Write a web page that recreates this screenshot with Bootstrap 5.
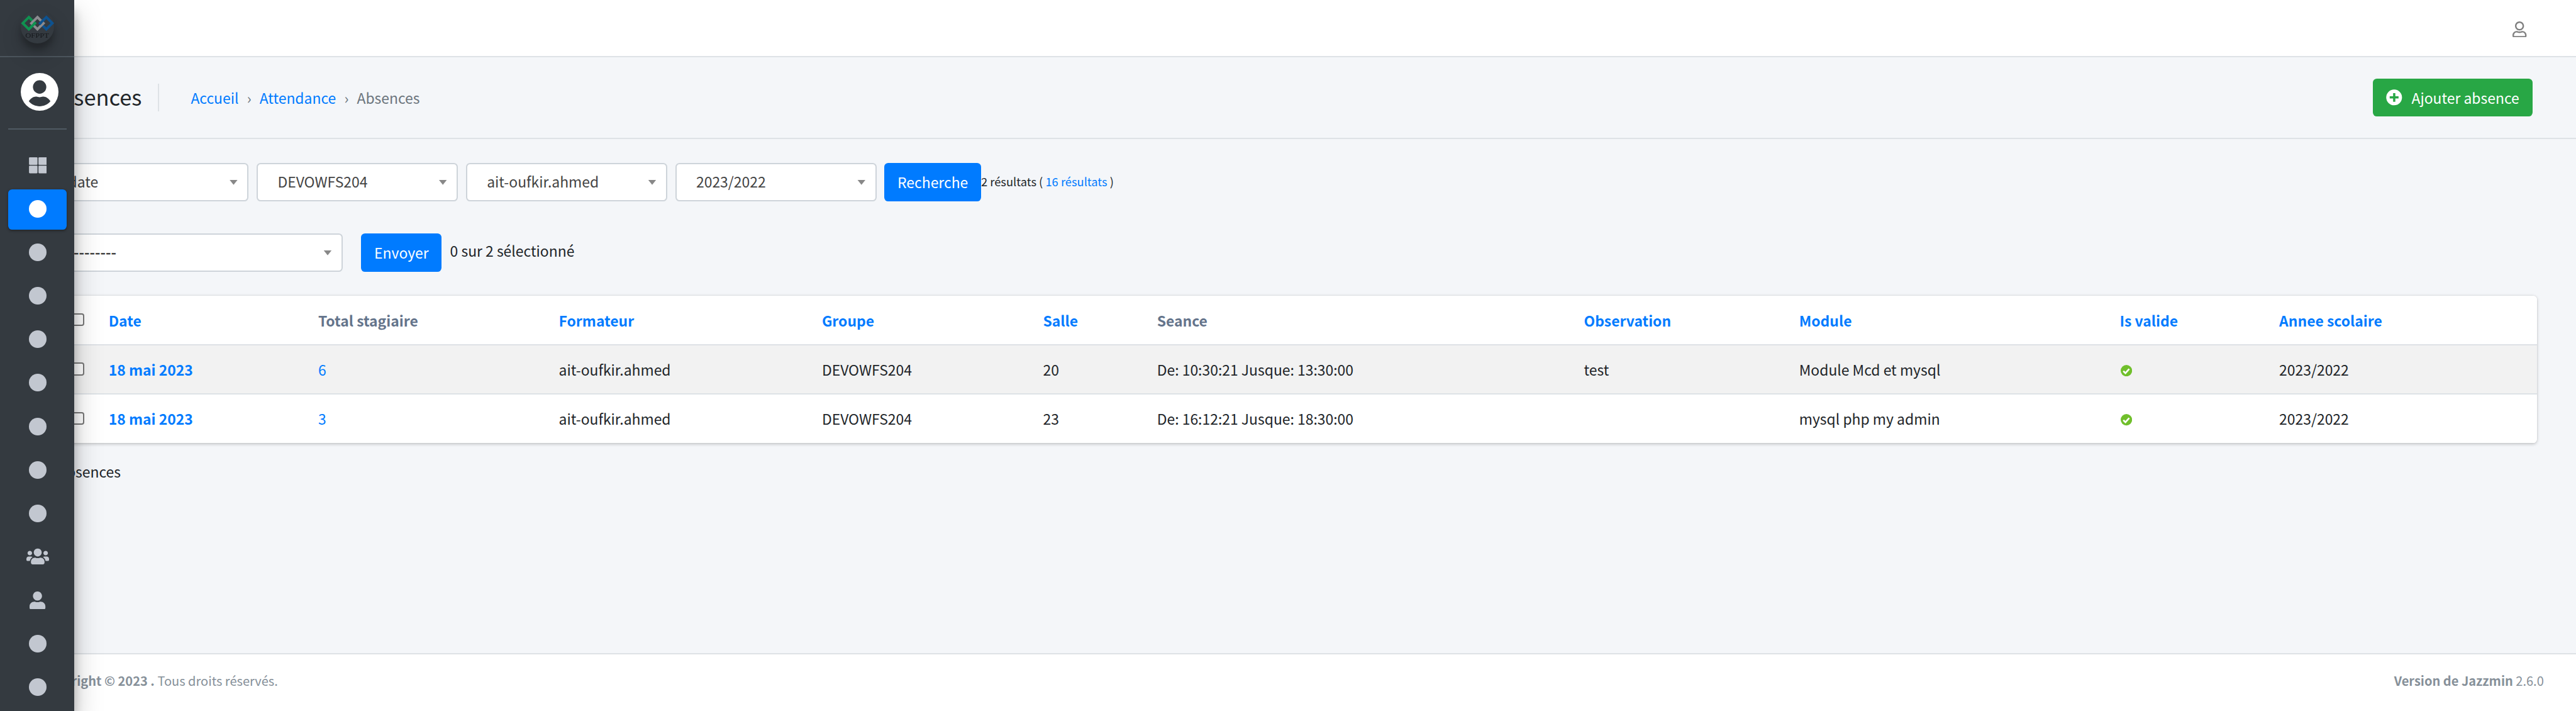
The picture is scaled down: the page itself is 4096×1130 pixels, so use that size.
<!DOCTYPE html>
<html lang="fr">
<head>
<meta charset="utf-8">
<meta name="viewport" content="width=device-width, initial-scale=1">
<title>Absences</title>
<link href="https://cdn.jsdelivr.net/npm/bootstrap@5.3.0/dist/css/bootstrap.min.css" rel="stylesheet">
<style>
:root{font-size:25.6px}
body{font-family:"Noto Sans CJK SC","Noto Sans",sans-serif;font-size:22.92px;line-height:38.4px;color:#212529;background:#f4f6f9;height:1130px;overflow:hidden;--left:75.2px}
a{color:#007bff;text-decoration:none}
svg{display:block;fill:currentColor}
.topnav{height:91.2px;border-bottom:2px solid #dee2e6;padding:3.6px 78.4px 0 0;color:#808080}
.page-head{height:129.6px;border-bottom:2px solid #dee2e6;padding-left:var(--left);padding-right:68.8px}
.page-head h1{font-size:34.4px;line-height:1.2;font-weight:400;margin:0;padding-bottom:3.6px;width:176px}
.crumbs{border-left:2px solid #dee2e6;height:44.8px;padding-left:50.2px;color:#6c757d}
.crumbs .sep{width:33.2px;text-align:center}
.btn{--bs-btn-font-size:22.92px;--bs-btn-border-radius:6.4px;--bs-btn-line-height:38.4px;height:60.8px;padding:0;border:0;color:#fff;white-space:nowrap}
.btn-primary{--bs-btn-bg:#007bff}
.btn-success{--bs-btn-bg:#28a745;width:254.4px}
.btn-success svg{margin-right:14.6px}
.btn-search{width:153.6px}
.btn-send{width:128px;margin:0 13.2px 0 29.6px}
.main-area{padding-left:var(--left);padding-right:62.4px;padding-top:38.4px}
.filters{gap:12.8px}
.actions{margin:51.2px 0 38.4px}
.picker{width:320px;height:60.8px;background:#fff;border:2px solid #ced4da;border-radius:6.4px;color:#444;padding:0 15.4px 3.6px 31.4px}
.picker::after{content:"";width:12.8px;height:8px;background:#888;clip-path:polygon(0 0,100% 0,50% 100%);margin-top:4px}
.picker-wide{width:469.6px}
.hits{font-size:18.34px;padding-bottom:3px}
.dashes{font-weight:700}
.picked{padding-bottom:7.2px}
.total{margin-top:25.6px}
.list-card{border-radius:6.4px;overflow:hidden;box-shadow:0 0 1.6px rgba(0,0,0,.125),0 1.6px 4.8px rgba(0,0,0,.2);background:#fff;height:233.6px}
.list-card .table{--bs-table-bg:#fff;--bs-table-striped-bg:#f2f2f2;--bs-table-color:#212529;--bs-table-striped-color:#212529;table-layout:fixed;width:3958.4px;border-collapse:separate;border-spacing:0}
.list-card .table>:not(caption)>*>*{height:78.4px;padding:0 19.2px;border-bottom:2px solid #dee2e6;vertical-align:middle;white-space:nowrap;line-height:38.4px}
.list-card .table>tbody>tr:last-child>*{border-bottom:0;height:76.8px}
.list-card .table>thead>tr>*{padding-top:1px}
.list-card th{font-weight:700}
.list-card thead th{color:#64748b}
.list-card .table>:not(caption)>*>.tick{padding:0 0 0 38.4px}
.box{width:20.8px;height:20.8px;border:2px solid #767676;border-radius:4px;background:#fff;margin-top:-1px}
.valid{width:18.2px;height:18.2px;margin:4px 0 0 1px}
.foot{height:92px;background:#fff;border-top:2px solid #dee2e6;color:#869099;font-size:20.05px;padding:0 51.2px 6px 63.5px}
.side{position:fixed;left:0;top:0;bottom:0;width:118.4px;background:#343a40;color:#c2c7d0;box-shadow:0 22.4px 44.8px rgba(0,0,0,.25),0 16px 16px rgba(0,0,0,.22);overflow:visible}
.brand{height:91.2px;border-bottom:2px solid #4b545c;padding:16px 0 0 33.4px}
.brand-disc{width:53px;height:53px;border-radius:50%;box-shadow:0 16px 32px rgba(0,0,0,.19),0 9.6px 9.6px rgba(0,0,0,.23)}
.brand-disc path{fill:none;stroke-width:5}
.who{height:115.2px;margin:0 12.8px;border-bottom:2px solid #4f5962;padding:25.2px 0 0 20.2px;color:#fff}
.menu{padding:25.2px 12.8px 0}
.menu .nav-link{height:64px;margin-bottom:5.12px;padding:0 0 1.4px 1.6px;border-radius:6.4px;color:#c2c7d0}
.menu .nav-link.active{background:#007bff;color:#fff;box-shadow:0 1.6px 4.8px rgba(0,0,0,.12),0 1.6px 3.2px rgba(0,0,0,.24)}
.dot{width:28px;height:28px;border-radius:50%;background:currentColor}
</style>
<script src="https://cdn.jsdelivr.net/npm/bootstrap@5.3.0/dist/js/bootstrap.bundle.min.js"></script>
</head>
<body class="d-flex flex-column">
<nav class="topnav bg-white d-flex align-items-center justify-content-end flex-shrink-0">
  <svg width="22.4" height="25.6" viewBox="0 0 448 512"><path d="M313.6 304c-28.7 0-42.5 16-89.6 16-47.1 0-60.8-16-89.6-16C60.2 304 0 364.2 0 438.4V464c0 26.5 21.5 48 48 48h352c26.5 0 48-21.5 48-48v-25.6c0-74.2-60.2-134.4-134.4-134.4zM400 464H48v-25.6c0-47.6 38.8-86.4 86.4-86.4 14.6 0 38.3 16 89.6 16 51.7 0 74.9-16 89.6-16 47.6 0 86.4 38.8 86.4 86.4V464zM224 288c79.5 0 144-64.5 144-144S303.5 0 224 0 80 64.5 80 144s64.5 144 144 144zm0-240c52.9 0 96 43.1 96 96s-43.1 96-96 96-96-43.1-96-96 43.1-96 96-96z"/></svg>
</nav>
<header class="page-head d-flex align-items-center flex-shrink-0">
  <h1>Absences</h1>
  <div class="crumbs d-flex align-items-center"><a href="#">Accueil</a><span class="sep">›</span><a href="#">Attendance</a><span class="sep">›</span><span>Absences</span></div>
  <a href="#" class="btn btn-success ms-auto d-flex align-items-center justify-content-center">
    <svg width="25.6" height="25.6" viewBox="0 0 32 32"><path fill-rule="evenodd" d="M16 .3a15.7 15.7 0 1 0 0 31.4 15.7 15.7 0 0 0 0-31.4zM14 7.5h4.4v6.3h6.4v4.4h-6.4v6.6H14v-6.6H7.2v-4.4H14z"/></svg>Ajouter absence</a>
</header>
<main class="main-area flex-grow-1">
  <div class="d-flex align-items-center">
    <div class="filters d-flex">
      <div class="picker d-flex align-items-center justify-content-between">date</div>
      <div class="picker d-flex align-items-center justify-content-between">DEVOWFS204</div>
      <div class="picker d-flex align-items-center justify-content-between">ait-oufkir.ahmed</div>
      <div class="picker d-flex align-items-center justify-content-between">2023/2022</div>
      <button class="btn btn-primary btn-search">Recherche</button>
    </div>
    <span class="hits">2 résultats ( <a href="#">16 résultats</a> )</span>
  </div>
  <div class="actions d-flex align-items-center">
    <div class="picker picker-wide d-flex align-items-center justify-content-between"><span class="dashes">---------</span></div>
    <button class="btn btn-primary btn-send">Envoyer</button>
    <span class="picked">0 sur 2 sélectionné</span>
  </div>
  <div class="list-card">
    <table class="table table-striped mb-0">
      <colgroup><col style="width:78.4px"><col style="width:333.2px"><col style="width:382.6px"><col style="width:418.4px"><col style="width:351.6px"><col style="width:181.2px"><col style="width:678.8px"><col style="width:342.2px"><col style="width:509.8px"><col style="width:253.6px"><col></colgroup>
      <thead><tr><th class="tick"><div class="box"></div></th><th><a href="#">Date</a></th><th>Total stagiaire</th><th><a href="#">Formateur</a></th><th><a href="#">Groupe</a></th><th><a href="#">Salle</a></th><th>Seance</th><th><a href="#">Observation</a></th><th><a href="#">Module</a></th><th><a href="#">Is valide</a></th><th><a href="#">Annee scolaire</a></th></tr></thead>
      <tbody>
        <tr><td class="tick"><div class="box"></div></td><th><a href="#">18 mai 2023</a></th><td><a href="#">6</a></td><td>ait-oufkir.ahmed</td><td>DEVOWFS204</td><td>20</td><td>De: 10:30:21 Jusque: 13:30:00</td><td>test</td><td>Module Mcd et mysql</td><td><svg class="valid" viewBox="0 0 13 13"><circle cx="6.5" cy="6.5" r="6.5" fill="#70bf2b"/><path d="M3 7l2.4 2.3 4.3-4.8" fill="none" stroke="#fff" stroke-width="1.9"/></svg></td><td>2023/2022</td></tr>
        <tr><td class="tick"><div class="box"></div></td><th><a href="#">18 mai 2023</a></th><td><a href="#">3</a></td><td>ait-oufkir.ahmed</td><td>DEVOWFS204</td><td>23</td><td>De: 16:12:21 Jusque: 18:30:00</td><td></td><td>mysql php my admin</td><td><svg class="valid" viewBox="0 0 13 13"><circle cx="6.5" cy="6.5" r="6.5" fill="#70bf2b"/><path d="M3 7l2.4 2.3 4.3-4.8" fill="none" stroke="#fff" stroke-width="1.9"/></svg></td><td>2023/2022</td></tr>
      </tbody>
    </table>
  </div>
  <div class="total">2 absences</div>
</main>
<footer class="foot d-flex align-items-center justify-content-between flex-shrink-0">
  <div><b>Copyright © 2023 .</b> Tous droits réservés.</div>
  <div><b>Version de Jazzmin</b> 2.6.0</div>
</footer>
<aside class="side">
  <div class="brand">
    <div class="brand-disc">
      <svg width="53" height="53" viewBox="0 0 66 66">
        <path d="M16 14L28 26 16 38 4 26z" stroke="#0f9150"/>
        <path d="M50.600 14L62.600 26 50.600 38 38.600 26z" stroke="#0d5290"/>
        <path d="M33 14L45 26 33 38 21 26z" stroke="#8b8c90"/>
        <path d="M26 24L28 26 20 34" stroke="#0f9150"/>
        <path d="M40.600 28L38.600 26 46 18.600" stroke="#0d5290"/>
        <text x="9" y="55" font-family="Liberation Serif" font-size="14" textLength="47" lengthAdjust="spacingAndGlyphs" fill="#15181b">OFPPT</text>
      </svg>
    </div>
  </div>
  <div class="who">
    <svg width="60" height="60" viewBox="0 0 75 75"><path fill-rule="evenodd" d="M37.500 0a37.500 37.500 0 1 0 0 75 37.500 37.500 0 0 0 0-75zm0 14.500a13.300 13.300 0 1 1 0 26.600 13.300 13.300 0 0 1 0-26.600zM16 56c4-6 10-9.500 15-9 4 1.300 9 1.300 13 0 5-.5 11 3 15 9-10 13.500-33 13.500-43 0z"/></svg>
  </div>
  <ul class="menu nav flex-column flex-nowrap">
    <li><a class="nav-link d-flex align-items-center justify-content-center" href="#"><svg width="28.8" height="25.4" viewBox="0 0 36 32"><rect width="17" height="15.200" rx="1.600"/><rect x="19" width="17" height="15.200" rx="1.600"/><rect y="16.800" width="17" height="15.200" rx="1.600"/><rect x="19" y="16.800" width="17" height="15.200" rx="1.600"/></svg></a></li>
    <li><a class="nav-link active d-flex align-items-center justify-content-center" href="#"><i class="dot"></i></a></li>
    <li><a class="nav-link d-flex align-items-center justify-content-center" href="#"><i class="dot"></i></a></li>
    <li><a class="nav-link d-flex align-items-center justify-content-center" href="#"><i class="dot"></i></a></li>
    <li><a class="nav-link d-flex align-items-center justify-content-center" href="#"><i class="dot"></i></a></li>
    <li><a class="nav-link d-flex align-items-center justify-content-center" href="#"><i class="dot"></i></a></li>
    <li><a class="nav-link d-flex align-items-center justify-content-center" href="#"><i class="dot"></i></a></li>
    <li><a class="nav-link d-flex align-items-center justify-content-center" href="#"><i class="dot"></i></a></li>
    <li><a class="nav-link d-flex align-items-center justify-content-center" href="#"><i class="dot"></i></a></li>
    <li><a class="nav-link d-flex align-items-center justify-content-center" href="#"><svg width="36" height="28.800" viewBox="0 0 640 512"><path d="M96 224c35.300 0 64-28.700 64-64s-28.700-64-64-64-64 28.700-64 64 28.700 64 64 64zm448 0c35.300 0 64-28.700 64-64s-28.700-64-64-64-64 28.700-64 64 28.700 64 64 64zm32 32h-64c-17.600 0-33.500 7.100-45.100 18.600 40.300 22.100 68.900 62 75.100 109.400h66c17.700 0 32-14.300 32-32v-32c0-35.300-28.700-64-64-64zm-256 0c61.900 0 112-50.100 112-112S381.900 32 320 32 208 82.100 208 144s50.100 112 112 112zm76.800 32h-8.300c-20.800 10-43.900 16-68.500 16s-47.600-6-68.500-16h-8.300C179.600 288 128 339.600 128 403.200V432c0 26.500 21.500 48 48 48h288c26.500 0 48-21.500 48-48v-28.800c0-63.600-51.600-115.200-115.200-115.200zm-223.700-13.400C161.500 263.100 145.600 256 128 256H64c-35.300 0-64 28.700-64 64v32c0 17.700 14.300 32 32 32h65.900c6.300-47.400 34.900-87.300 75.200-109.400z"/></svg></a></li>
    <li><a class="nav-link d-flex align-items-center justify-content-center" href="#"><svg width="25.200" height="28.800" viewBox="0 0 448 512"><path d="M224 256c70.700 0 128-57.300 128-128S294.700 0 224 0 96 57.300 96 128s57.300 128 128 128zm89.600 32h-16.700c-22.200 10.200-46.900 16-72.900 16s-50.600-5.800-72.900-16h-16.700C60.200 288 0 348.200 0 422.400V464c0 26.500 21.500 48 48 48h352c26.500 0 48-21.500 48-48v-41.600c0-74.200-60.200-134.400-134.400-134.400z"/></svg></a></li>
    <li><a class="nav-link d-flex align-items-center justify-content-center" href="#"><i class="dot"></i></a></li>
    <li><a class="nav-link d-flex align-items-center justify-content-center" href="#"><i class="dot"></i></a></li>
  </ul>
</aside>
</body>
</html>
